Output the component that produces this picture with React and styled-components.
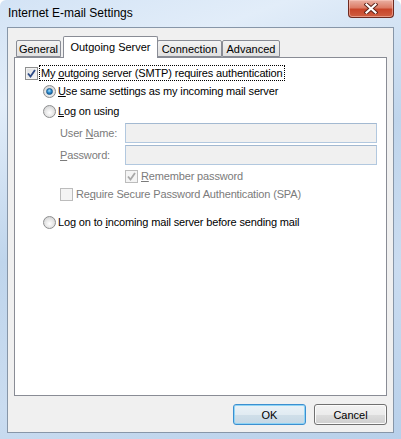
import React from "react";
import styled, { createGlobalStyle } from "styled-components";

const GlobalStyle = createGlobalStyle`
    html, body {
        margin: 0;
        padding: 0;
        background: #ffffff;
    }
    body {
        font-family: "Liberation Sans", Arial, sans-serif;
        font-size: 11px;
        color: #000;
    }
    * {
        box-sizing: border-box;
    }
`;

const Window = styled.div`
    width: 401px;
    height: 439px;
    display: flex;
    flex-direction: column;
    padding: 0 7px 6px 7px;
    border-radius: 6px 6px 0 0;
    background: linear-gradient(160deg, #d3e3f5 0%, #e2edf9 18%, #bfd5ec 45%, #cadcf0 70%, #b8d0ea 100%);
`;

const TitleBar = styled.div`
    height: 27px;
    display: flex;
    align-items: flex-start;
    justify-content: space-between;
`;

const Title = styled.div`
    margin-top: 6px;
    padding-left: 1px;
    font-size: 12px;
    line-height: 15px;
    color: #000;
`;

const CloseButton = styled.div`
    width: 46px;
    height: 18px;
    display: flex;
    align-items: center;
    justify-content: center;
    border: 1px solid #6e2a20;
    border-top: none;
    border-radius: 0 0 4px 4px;
    background: linear-gradient(#eab0a3 0%, #dc7c66 45%, #c8452a 55%, #cf5f42 100%);
    box-shadow: inset 0 0 0 1px rgba(255, 210, 200, 0.5);
`;

const Client = styled.div`
    flex: 1;
    display: flex;
    flex-direction: column;
    background: #f0f0f0;
    border: 1px solid #8796a8;
    padding: 8px 6px 7px 6px;
`;

const TabStrip = styled.div`
    height: 21px;
    display: flex;
    align-items: flex-end;
    padding-left: 2px;
`;

const Tab = styled.div`
    width: ${p => p.w}px;
    height: ${p => (p.selected ? 22 : 17)}px;
    margin-left: ${p => p.ml || 0}px;
    margin-bottom: ${p => (p.selected ? -1 : 0)}px;
    position: relative;
    z-index: ${p => (p.selected ? 2 : 1)};
    display: flex;
    justify-content: center;
    align-items: flex-start;
    padding-top: ${p => (p.selected ? 3 : 1)}px;
    line-height: 15px;
    border: 1px solid #898c95;
    border-bottom: ${p => (p.selected ? "none" : "1px solid #898c95")};
    border-radius: 2px 2px 0 0;
    background: ${p => (p.selected ? "#ffffff" : "linear-gradient(#f3f3f3, #e9e9e9 50%, #e1e1e1)")};
`;

const Panel = styled.div`
    flex: 1;
    display: flex;
    flex-direction: column;
    background: #ffffff;
    border: 1px solid #898c95;
    padding-left: 10px;
    letter-spacing: -0.15px;
`;

const Row = styled.div`
    height: ${p => p.h || 16}px;
    margin-top: ${p => p.mt || 0}px;
    padding-left: ${p => p.indent || 0}px;
    display: flex;
    align-items: center;
`;

const Label = styled.span`
    line-height: 14px;
    margin-left: ${p => p.gap || 2}px;
    color: ${p => (p.disabled ? "#7b7b7b" : "#000")};
    white-space: nowrap;
`;

const Focus = styled.span`
    margin-left: 1px;
    padding: 0 1px;
    height: 16px;
    line-height: 14px;
    border: 1px dotted #000;
    white-space: nowrap;
`;

const Key = styled.u`
    text-decoration: underline;
    text-underline-offset: 1px;
`;

const Box = styled.span`
    width: 13px;
    height: 13px;
    flex: none;
    display: flex;
    align-items: center;
    justify-content: center;
    border: 1px solid ${p => (p.disabled ? "#bcbcbc" : "#8e8f8f")};
    background: ${p => (p.disabled ? "#f4f4f4" : "linear-gradient(135deg, #dcdee0, #f7f7f7)")};
    box-shadow: inset 0 0 0 1px ${p => (p.disabled ? "#f4f4f4" : "#f3f3f3")};
`;

const Radio = styled.span`
    width: 13px;
    height: 13px;
    flex: none;
    display: flex;
    align-items: center;
    justify-content: center;
    border-radius: 50%;
    border: 1px solid #8d8e8f;
    background: radial-gradient(circle at 50% 60%, #ffffff 0%, #e8e8e8 45%, #c9cacb 100%);
`;

const Dot = styled.span`
    width: 7px;
    height: 7px;
    border-radius: 50%;
    border: 1px solid #1a5a8e;
    background: radial-gradient(circle at 45% 35%, #a9def8 0%, #2f8fd2 45%, #0d4f8a 100%);
`;

const FieldLabel = styled.span`
    width: 65px;
    flex: none;
    color: #7b7b7b;
    line-height: 14px;
`;

const Input = styled.div`
    width: 252px;
    height: 20px;
    border: 1px solid #b2c8df;
    border-top-color: #a3b9d1;
    background: #f0f0f0;
`;

const ButtonRow = styled.div`
    margin-top: 8px;
    display: flex;
    justify-content: flex-end;
    gap: 8px;
`;

const Button = styled.div`
    width: 73px;
    height: 21px;
    display: flex;
    align-items: center;
    justify-content: center;
    border-radius: 3px;
    border: 1px solid ${p => (p.primary ? "#3c8fd0" : "#707070")};
    background: ${p => (p.primary
        ? "linear-gradient(#eaf2f7 0%, #e1ebf2 50%, #d0dfe9 50%, #c6d8e5 100%)"
        : "linear-gradient(#f2f2f2 0%, #ebebeb 50%, #dddddd 50%, #cfcfcf 100%)")};
    box-shadow: inset 0 0 0 1px ${p => (p.primary ? "#8fd4f5" : "#fbfbfb")};
    color: #000;
`;

function CheckMark({ color }) {
    return (
        <svg width="9" height="9" viewBox="0 0 9 9">
            <polyline points="1,4.5 3.5,7.5 8,1" fill="none" stroke={color} strokeWidth="1.8" />
        </svg>
    );
}

function CloseGlyph() {
    return (
        <svg width="14" height="11" viewBox="0 0 14 11">
            <path d="M2.5 1.5 L11.5 9.5 M11.5 1.5 L2.5 9.5" stroke="#5a2118" strokeWidth="4" strokeLinecap="square" />
            <path d="M2.5 1.5 L11.5 9.5 M11.5 1.5 L2.5 9.5" stroke="#ffffff" strokeWidth="2.2" strokeLinecap="square" />
        </svg>
    );
}

export default function App() {
    return (
        <>
            <GlobalStyle />
            <Window>
                <TitleBar>
                    <Title>Internet E-mail Settings</Title>
                    <CloseButton><CloseGlyph /></CloseButton>
                </TitleBar>
                <Client>
                    <TabStrip>
                        <Tab w={45}>General</Tab>
                        <Tab w={95} ml={2} selected>Outgoing Server</Tab>
                        <Tab w={65} ml={-1}>Connection</Tab>
                        <Tab w={58}>Advanced</Tab>
                    </TabStrip>
                    <Panel>
                        <Row mt={7}>
                            <Box><CheckMark color="#2c4a86" /></Box>
                            <Focus>My <Key>o</Key>utgoing server (SMTP) requires authentication</Focus>
                        </Row>
                        <Row mt={2} indent={18}>
                            <Radio><Dot /></Radio>
                            <Label><Key>U</Key>se same settings as my incoming mail server</Label>
                        </Row>
                        <Row mt={4} indent={18}>
                            <Radio />
                            <Label><Key>L</Key>og on using</Label>
                        </Row>
                        <Row mt={4} h={20} indent={35}>
                            <FieldLabel>User <Key>N</Key>ame:</FieldLabel>
                            <Input />
                        </Row>
                        <Row mt={2} h={20} indent={35}>
                            <FieldLabel><Key>P</Key>assword:</FieldLabel>
                            <Input />
                        </Row>
                        <Row mt={3} indent={100}>
                            <Box disabled><CheckMark color="#a8a8a8" /></Box>
                            <Label disabled gap={3}><Key>R</Key>emember password</Label>
                        </Row>
                        <Row mt={2} indent={35}>
                            <Box disabled />
                            <Label disabled gap={3}>Re<Key>q</Key>uire Secure Password Authentication (SPA)</Label>
                        </Row>
                        <Row mt={12} indent={18}>
                            <Radio />
                            <Label>Log on to <Key>i</Key>ncoming mail server before sending mail</Label>
                        </Row>
                    </Panel>
                    <ButtonRow>
                        <Button primary>OK</Button>
                        <Button>Cancel</Button>
                    </ButtonRow>
                </Client>
            </Window>
        </>
    );
}
